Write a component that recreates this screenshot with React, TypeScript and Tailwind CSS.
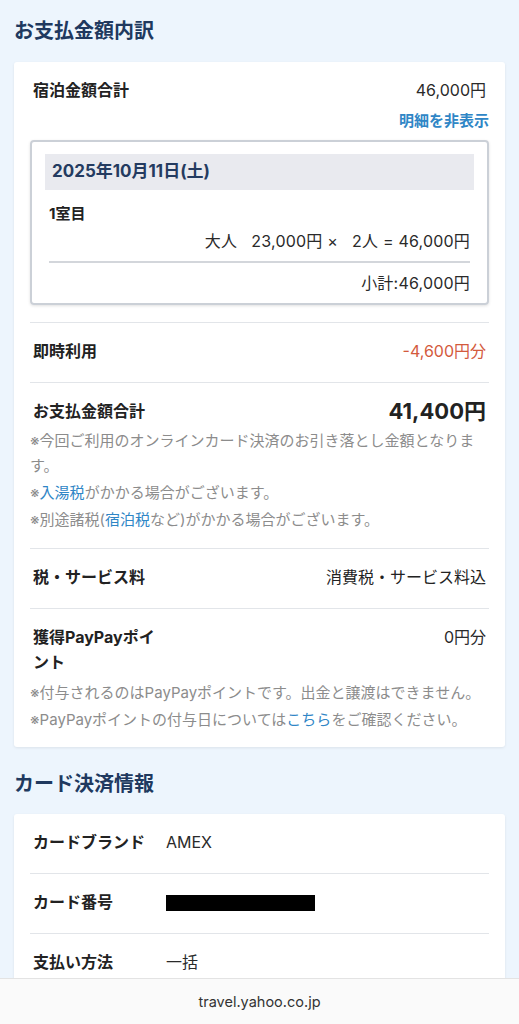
import React from "react";

type Note = { parts: { text: string; link?: boolean }[] };

function Divider() {
  return <div className="h-px bg-[#e2e5e9]" />;
}

function Notes({ notes }: { notes: Note[] }) {
  return (
    <div className="flex flex-col gap-[2px] text-[15px] leading-[25px] text-[#8c8c8c]">
      {notes.map((note, i) => (
        <p key={i}>
          {note.parts.map((p, j) =>
            p.link ? (
              <span key={j} className="text-[#2f86c6]">
                {p.text}
              </span>
            ) : (
              <span key={j}>{p.text}</span>
            )
          )}
        </p>
      ))}
    </div>
  );
}

function Row({
  label,
  value,
  valueClass = "",
}: {
  label: string;
  value: React.ReactNode;
  valueClass?: string;
}) {
  return (
    <div className="pt-4 pb-[18px]">
      <div className="flex items-start px-[3px]">
        <p className="w-[130px] shrink-0 font-bold text-[16px] leading-[25px] text-[#222]">
          {label}
        </p>
        <p className={`flex-1 text-right text-[16px] leading-[25px] ${valueClass}`}>
          {value}
        </p>
      </div>
    </div>
  );
}

function InfoRow({ label, children }: { label: string; children: React.ReactNode }) {
  return (
    <div className="flex items-center pt-4 pb-[18px] px-[3px]">
      <p className="w-[133px] shrink-0 font-bold text-[16px] leading-[25px] text-[#222]">
        {label}
      </p>
      <div className="flex-1 text-[16px] leading-[25px] text-[#2a2a2a]">{children}</div>
    </div>
  );
}

export default function App() {
  return (
    <div className="h-[1024px] flex flex-col bg-[#edf5fd] font-['Inter','Noto_Sans_CJK_JP',sans-serif] text-[#222]">
      <div className="flex-1 overflow-hidden px-[14px] pt-[17px]">
        <h2 className="text-[20px] leading-[28px] font-bold text-[#20395f] mb-[17px]">
          お支払金額内訳
        </h2>

        <section className="bg-white rounded-[3px] shadow-[0_1px_3px_rgba(0,0,0,0.08)] px-4 pb-[15px]">
          <div className="pt-[16px] flex items-start px-[3px]">
            <p className="flex-1 font-bold text-[16px] leading-[25px]">宿泊金額合計</p>
            <p className="text-[16px] leading-[25px] text-[#2a2a2a]">46,000円</p>
          </div>
          <p className="mt-[5px] text-right font-bold text-[15px] leading-[25px] text-[#2f86c6]">
            明細を非表示
          </p>

          <div className="mt-[7px] mb-[17px] border-2 border-[#cbd0d7] rounded-[4px] shadow-[0_1px_3px_rgba(0,0,0,0.12)] px-[13px] pt-3 pb-[9px]">
            <div className="bg-[#e9eaef] h-9 flex items-center px-[7px]">
              <p className="font-bold text-[17px] text-[#243b60]">2025年10月11日(土)</p>
            </div>
            <div className="px-1 text-[#2a2a2a]">
              <p className="mt-[13px] font-bold text-[15px] leading-[22px] text-[#222]">1室目</p>
              <p className="mt-[5px] text-right text-[16px] leading-[22px] tracking-[0.2px]">
                大人&nbsp;&nbsp; 23,000円 ×&nbsp;&nbsp; 2人 = 46,000円
              </p>
              <div className="mt-[9px] h-[2px] bg-[#d3d6db]" />
              <p className="mt-[9px] text-right text-[16px] leading-[22px] tracking-[0.2px]">小計:46,000円</p>
            </div>
          </div>

          <Divider />
          <Row label="即時利用" value="-4,600円分" valueClass="text-[#d35a3d]" />
          <Divider />
          <div className="pt-4 pb-[16px]">
            <div className="flex items-center px-[3px]">
              <p className="flex-1 font-bold text-[16px] leading-[25px]">お支払金額合計</p>
              <p className="font-bold text-[22px] leading-[25px]">41,400円</p>
            </div>
            <div className="mt-1">
              <Notes
                notes={[
                  { parts: [{ text: "※今回ご利用のオンラインカード決済のお引き落とし金額となります。" }] },
                  {
                    parts: [
                      { text: "※" },
                      { text: "入湯税", link: true },
                      { text: "がかかる場合がございます。" },
                    ],
                  },
                  {
                    parts: [
                      { text: "※別途諸税(" },
                      { text: "宿泊税", link: true },
                      { text: "など)がかかる場合がございます。" },
                    ],
                  },
                ]}
              />
            </div>
          </div>
          <Divider />
          <Row label="税・サービス料" value="消費税・サービス料込" />
          <Divider />
          <div className="pt-4">
            <div className="flex items-start px-[3px]">
              <p className="w-[130px] shrink-0 font-bold text-[16px] leading-[25px]">
                獲得PayPayポイント
              </p>
              <p className="flex-1 text-right text-[16px] leading-[25px] text-[#2a2a2a]">0円分</p>
            </div>
            <div className="mt-[5px]">
              <Notes
                notes={[
                  { parts: [{ text: "※付与されるのはPayPayポイントです。出金と譲渡はできません。" }] },
                  {
                    parts: [
                      { text: "※PayPayポイントの付与日については" },
                      { text: "こちら", link: true },
                      { text: "をご確認ください。" },
                    ],
                  },
                ]}
              />
            </div>
          </div>
        </section>

        <h2 className="mt-[23px] mb-4 text-[20px] leading-[28px] font-bold text-[#20395f]">
          カード決済情報
        </h2>

        <section className="bg-white rounded-[3px] shadow-[0_1px_3px_rgba(0,0,0,0.08)] px-4">
          <InfoRow label="カードブランド">AMEX</InfoRow>
          <Divider />
          <InfoRow label="カード番号">
            <div className="w-[149px] h-4 bg-black" />
          </InfoRow>
          <Divider />
          <InfoRow label="支払い方法">一括</InfoRow>
          <Divider />
        </section>
      </div>

      <div className="h-[46px] shrink-0 bg-[#fafafa] border-t border-[#e3e3e3] flex items-center justify-center text-[14.5px] text-[#333]">
        travel.yahoo.co.jp
      </div>
    </div>
  );
}
